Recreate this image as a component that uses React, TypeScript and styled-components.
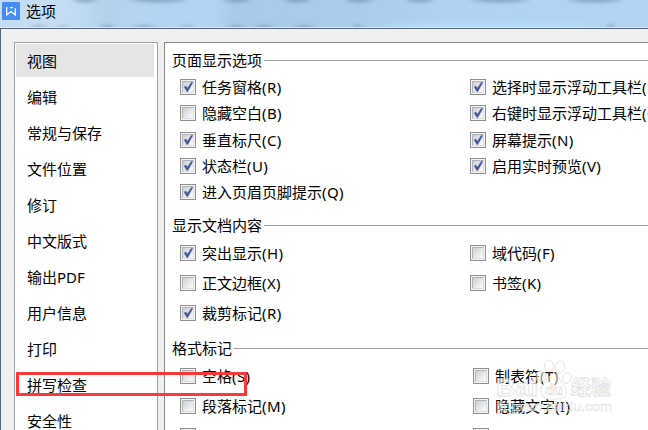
import React from "react";
import styled, { createGlobalStyle } from "styled-components";

const GlobalStyle = createGlobalStyle`
  * { box-sizing: border-box; }
  body {
    margin: 0;
    overflow: hidden;
    color: #000;
    font: 15px/20px "Noto Sans", "Noto Sans CJK SC", sans-serif;
  }
`;

const Window = styled.div`
  position: relative;
  width: 648px;
  height: 430px;
  overflow: hidden;
  display: flex;
  flex-direction: column;
`;

const TitleBar = styled.header`
  position: relative;
  flex: 0 0 28px;
  display: flex;
  align-items: flex-start;
  gap: 6px;
  padding: 2px 0 0 2px;
  border-bottom: 1px solid #d9ecfd;
  background: linear-gradient(90deg, #c3dcf3 0, #c6def4 60px, #b4d2ec 110px, #b4d5f2 150px, #b3d4f2 212px, #a9cae9 235px, #abceed 380px, #b1d3f2 450px, #b3d4f3 100%);
`;

const GlassBlur = styled.svg`
  position: absolute;
  inset: 0;
`;

const Logo = styled.svg`
  position: relative;
  flex: none;
`;

const Title = styled.h1`
  position: relative;
  margin: -1px 0 0;
  font: inherit;
`;

const Body = styled.div`
  flex: 1;
  min-height: 0;
  display: flex;
  gap: 6px;
  padding: 13px 0 0 13px;
  border: solid #56657a;
  border-width: 1px 0 0 1px;
  background: #f0f0f0;
`;

const Sidebar = styled.nav`
  flex: 0 0 144px;
  height: 420px;
  padding: 1px 3px 0 1px;
  border: 1px solid #a0a0a0;
  background: #fff;
`;

const NavItem = styled.div<{ $active?: boolean }>`
  height: 36px;
  padding: 7px 0 0 11px;
  white-space: nowrap;
  background: ${(p) => (p.$active ? "linear-gradient(#e5e5e5 33px, #fff 33px)" : "none")};
`;

const Panel = styled.main`
  flex: 1;
  min-width: 0;
  height: 420px;
  padding: 5px 0 0 7px;
  border: solid #898792;
  border-width: 1px 0 0 1px;
  background: #fff;
`;

const Group = styled.section<{ $height: number }>`
  height: ${(p) => p.$height}px;
`;

const Legend = styled.h2`
  height: 25px;
  margin: 0;
  display: flex;
  align-items: center;
  gap: 2px;
  font: inherit;
  white-space: nowrap;

  &::after {
    content: "";
    flex: 1;
    height: 1px;
    background: #a0a0a0;
  }
`;

const LegendText = styled.span`
  padding-bottom: 2px;
`;

const Columns = styled.div<{ $second: number; $top: number }>`
  display: grid;
  grid-template-columns: ${(p) => p.$second}px 1fr;
  padding: ${(p) => p.$top}px 0 0 8px;
`;

const Option = styled.label<{ $height: number }>`
  height: ${(p) => p.$height}px;
  display: flex;
  align-items: center;
  gap: 6px;
  white-space: nowrap;
`;

const AccessKey = styled.span`
  letter-spacing: 0.4px;
`;

const Box = styled.span`
  flex: none;
  width: 16px;
  height: 16px;
  padding: 1px;
  border: 1px solid #8e8f8f;
  background: #f4f4f4;
`;

const BoxFace = styled.span`
  display: block;
  width: 12px;
  height: 12px;
  border: 1px solid;
  border-color: #aeb3b9 #dcdde0 #dcdde0 #aeb3b9;
  background: linear-gradient(135deg, #cbcfd5, #f6f6f6 85%);
`;

const Tick = styled.svg`
  display: block;
  overflow: visible;
`;

const Highlight = styled.div`
  position: absolute;
  left: 16px;
  top: 372px;
  width: 231px;
  height: 24px;
  border: 3px solid #fc3838;
`;

const Watermark = styled.svg`
  position: absolute;
  left: 490px;
  top: 354px;
`;

const navItems = ["视图", "编辑", "常规与保存", "文件位置", "修订", "中文版式", "输出PDF", "用户信息", "打印", "拼写检查", "安全性"];

type Entry = [text: string, key: string, checked: boolean];
type GroupData = { title: string; height: number; top: number; row: number; second: number; columns: Entry[][] };

const groups: GroupData[] = [
  {
    title: "页面显示选项", height: 165, top: 1, row: 26.25, second: 290,
    columns: [
      [["任务窗格", "(R)", true], ["隐藏空白", "(B)", false], ["垂直标尺", "(C)", true], ["状态栏", "(U)", true], ["进入页眉页脚提示", "(Q)", true]],
      [["选择时显示浮动工具栏", "(L)", true], ["右键时显示浮动工具栏", "(G)", true], ["屏幕提示", "(N)", true], ["启用实时预览", "(V)", true]],
    ],
  },
  {
    title: "显示文档内容", height: 123, top: 0, row: 30, second: 290,
    columns: [
      [["突出显示", "(H)", true], ["正文边框", "(X)", false], ["裁剪标记", "(R)", true]],
      [["域代码", "(F)", false], ["书签", "(K)", false]],
    ],
  },
  {
    title: "格式标记", height: 123, top: 0, row: 30, second: 293,
    columns: [
      [["空格", "(S)", false], ["段落标记", "(M)", false], ["", "", false]],
      [["制表符", "(T)", false], ["隐藏文字", "(I)", false], ["", "", false]],
    ],
  },
];

const smudges = [
  [85, -1, 12], [158, -1, 28], [237, -1, 13], [297, -1, 13], [359, -1, 13], [420, -1, 13], [500, -1, 28], [595, -1, 26],
  [39, 29, 8], [63, 29, 4], [107, 28, 6], [145, 29, 12], [187, 29, 5], [236, 29, 8], [264, 29, 9], [304, 29, 10], [358, 28, 4], [611, 27, 3],
];

function Checkbox({ checked }: { checked: boolean }) {
  return (
    <Box>
      <BoxFace>
        {checked && (
          <Tick width="10" height="10" viewBox="0 0 10 10">
            <path d="M1.2 4.9 3 4.1l1.4 2.1L8.2 .4l1.6.2-5 9-1-.1z" fill="#42569a" stroke="#42569a" strokeWidth=".4" />
          </Tick>
        )}
      </BoxFace>
    </Box>
  );
}

export default function App() {
  return (
    <Window>
      <GlobalStyle />
      <TitleBar>
        <GlassBlur width="648" height="27">
          <defs>
            <filter id="soft" x="-50%" y="-200%" width="200%" height="500%">
              <feGaussianBlur stdDeviation="3 2" />
            </filter>
          </defs>
          <ellipse cx="490" cy="26" rx="108" ry="4" fill="#b5dafc" filter="url(#soft)" />
          {smudges.map(([x, y, r]) => (
            <ellipse key={`${x}-${y}`} cx={x} cy={y} rx={r} ry="3" fill="#5a7591" opacity=".55" filter="url(#soft)" />
          ))}
        </GlassBlur>
        <Logo width="18" height="18" viewBox="0 0 18 18">
          <rect width="18" height="18" rx="1" fill="#468cf2" />
          <path d="M4.7 5v8L9 9.6l4.3 3.4V6.2M8 5.7h3" fill="none" stroke="#fff" strokeWidth="1.3" />
        </Logo>
        <Title>选项</Title>
      </TitleBar>
      <Body>
        <Sidebar>
          {navItems.map((name, i) => (
            <NavItem key={name} $active={i === 0}>{name}</NavItem>
          ))}
        </Sidebar>
        <Panel>
          {groups.map((g) => (
            <Group key={g.title} $height={g.height}>
              <Legend><LegendText>{g.title}</LegendText></Legend>
              <Columns $second={g.second} $top={g.top}>
                {g.columns.map((options, c) => (
                  <div key={c}>
                    {options.map(([text, accessKey, checked], i) => (
                      <Option key={i} $height={g.row}>
                        <Checkbox checked={checked} />
                        <span>{text}<AccessKey>{accessKey}</AccessKey></span>
                      </Option>
                    ))}
                  </div>
                ))}
              </Columns>
            </Group>
          ))}
        </Panel>
      </Body>
      <Highlight />
      <Watermark width="130" height="66" viewBox="0 0 130 66">
        <g fill="#fff" fillOpacity=".5" stroke="#d9d9d9" strokeOpacity=".85" strokeWidth=".8" fontFamily="'Liberation Sans', 'Noto Sans CJK SC', sans-serif">
          <text x="6" y="42" fontSize="24" fontWeight="bold" textLength="42" lengthAdjust="spacingAndGlyphs">Bai</text>
          <ellipse cx="51" cy="22" rx="4.2" ry="5.5" transform="rotate(-15 51 22)" />
          <ellipse cx="59" cy="12" rx="4.5" ry="6" />
          <ellipse cx="70" cy="13" rx="4.5" ry="6" transform="rotate(10 70 13)" />
          <ellipse cx="77" cy="24" rx="4.2" ry="5.5" transform="rotate(20 77 24)" />
          <path d="M64 20c-5 0-6 6-10 9-5 4-4 16 5 16h10c9 0 9-11 4-15-4-3-4-10-9-10z" />
          <text x="55" y="41" fontSize="15" fontWeight="bold" textLength="18">du</text>
          <text x="81" y="41" fontSize="20" fontWeight="bold" textLength="40">经验</text>
          <text x="7" y="57" fontSize="13" strokeWidth=".5" textLength="115" lengthAdjust="spacingAndGlyphs">jingyan.baidu.com</text>
        </g>
      </Watermark>
    </Window>
  );
}
